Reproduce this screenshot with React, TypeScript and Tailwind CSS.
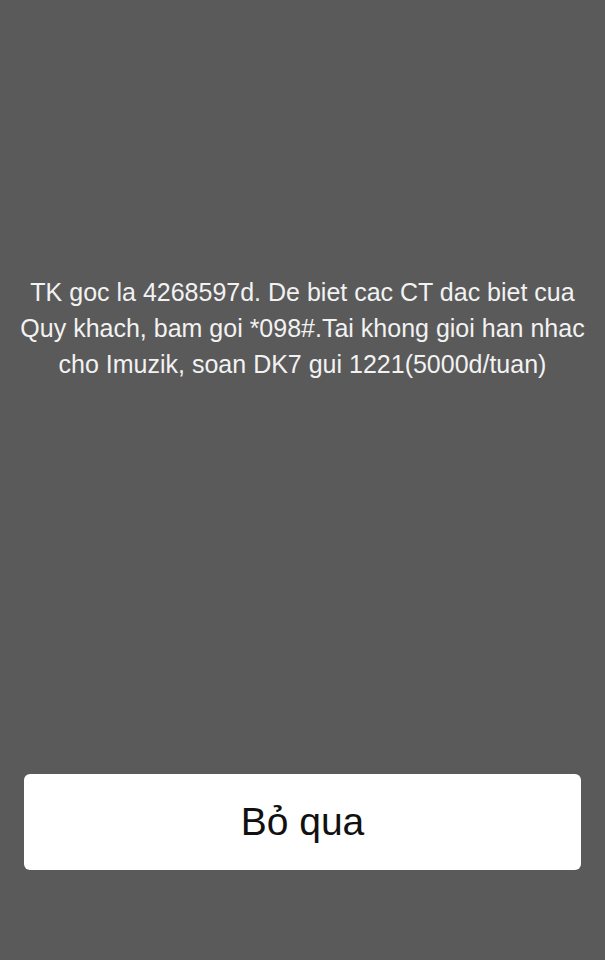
export default function App() {
  return (
    <div className="min-h-[960px] w-full bg-[#5a5a5a] flex flex-col font-['Liberation_Sans',Arial,sans-serif]">
      <div className="h-[274px]" />
      <p className="px-2 text-center text-[25px] leading-[36px] text-[#f2f2f2]">
        TK goc la 4268597d. De biet cac CT dac biet cua
        <br />
        Quy khach, bam goi *098#.Tai khong gioi han nhac
        <br />
        cho Imuzik, soan DK7 gui 1221(5000d/tuan)
      </p>
      <div className="flex-1" />
      <button className="mx-6 mb-[90px] h-[96px] rounded-md bg-white text-[39px] text-[#111] font-['Liberation_Sans',Arial,sans-serif]">
        Bỏ qua
      </button>
    </div>
  );
}
